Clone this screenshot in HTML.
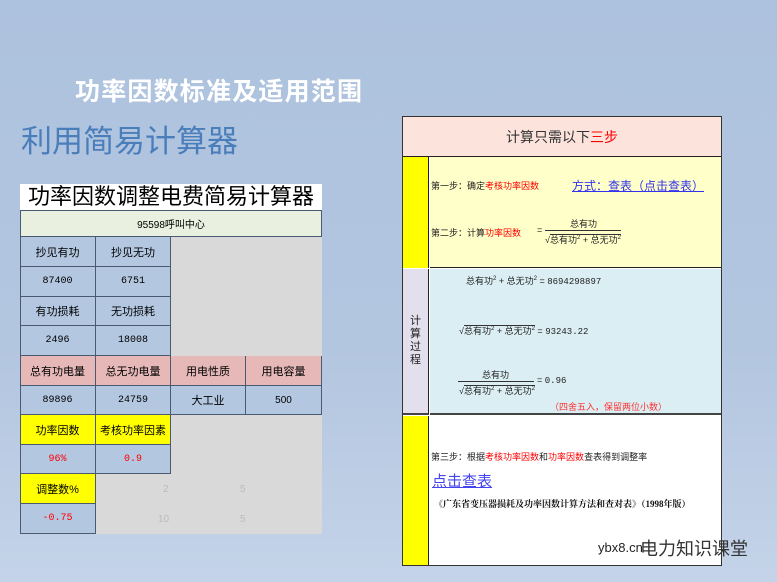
<!DOCTYPE html>
<html><head><meta charset="utf-8"><style>
*{margin:0;padding:0;box-sizing:border-box}
body{width:777px;height:582px;overflow:hidden;background:linear-gradient(#adc2de,#b3c6e0 60%,#c4d3e8);font-family:"Liberation Sans","Noto Sans CJK SC",sans-serif;position:relative}
.a{position:absolute}
.c{position:absolute;display:flex;align-items:center;justify-content:center;font-size:11px;color:#000;border-right:1px solid #4a5a70;border-bottom:1px solid #4a5a70}
.b{background:#b3c7e1}.p{background:#e6b8b8}.y{background:#ffff00}
.r{color:#ff0000}
.m{font-family:"Liberation Mono","Noto Sans CJK SC",monospace}
.s{font-size:9px;color:#222}
</style></head><body>
<div class="a" style="left:75px;top:72px;font-size:25px;font-weight:bold;color:#fff;letter-spacing:1.2px">功率因数标准及适用范围</div>
<div class="a" style="left:21px;top:116px;font-size:31px;color:#4a7ebb">利用简易计算器</div>

<div class="a" style="left:20px;top:184px;width:302px;height:26px;background:#fff;font-size:22px;line-height:26px;text-align:center;color:#000">功率因数调整电费简易计算器</div>
<div class="a" style="left:171px;top:237px;width:151px;height:297px;background:#d9d9d9"></div>
<div class="a" style="left:96px;top:474px;width:226px;height:60px;background:#d9d9d9"></div>
<div class="c" style="left:20px;top:210px;width:302px;height:27px;background:#e9f0df;border-left:1px solid #4a5a70;border-top:1px solid #4a5a70;font-size:10px">95598呼叫中心</div>
<div class="c b" style="left:20px;top:237px;width:76px;height:30px">抄见有功</div>
<div class="c b" style="left:96px;top:237px;width:75px;height:30px">抄见无功</div>
<div class="c b m" style="left:20px;top:267px;width:76px;height:30px;font-size:10px">87400</div>
<div class="c b m" style="left:96px;top:267px;width:75px;height:30px;font-size:10px">6751</div>
<div class="c b" style="left:20px;top:297px;width:76px;height:29px">有功损耗</div>
<div class="c b" style="left:96px;top:297px;width:75px;height:29px">无功损耗</div>
<div class="c b m" style="left:20px;top:326px;width:76px;height:30px;font-size:10px">2496</div>
<div class="c b m" style="left:96px;top:326px;width:75px;height:30px;font-size:10px">18008</div>
<div class="c p" style="left:20px;top:356px;width:76px;height:30px">总有功电量</div>
<div class="c p" style="left:96px;top:356px;width:75px;height:30px">总无功电量</div>
<div class="c p" style="left:171px;top:356px;width:75px;height:30px">用电性质</div>
<div class="c p" style="left:246px;top:356px;width:76px;height:30px">用电容量</div>
<div class="c b m" style="left:20px;top:386px;width:76px;height:29px;font-size:10px">89896</div>
<div class="c b m" style="left:96px;top:386px;width:75px;height:29px;font-size:10px">24759</div>
<div class="c b" style="left:171px;top:386px;width:75px;height:29px">大工业</div>
<div class="c b" style="left:246px;top:386px;width:76px;height:29px;font-size:10px">500</div>
<div class="c y" style="left:20px;top:415px;width:76px;height:30px">功率因数</div>
<div class="c y" style="left:96px;top:415px;width:75px;height:30px">考核功率因素</div>
<div class="c b m r" style="left:20px;top:445px;width:76px;height:29px;font-size:10px">96%</div>
<div class="c b m r" style="left:96px;top:445px;width:75px;height:29px;font-size:10px">0.9</div>
<div class="c y" style="left:20px;top:474px;width:76px;height:30px">调整数%</div>
<div class="c b m r" style="left:20px;top:504px;width:76px;height:30px;font-size:10px">-0.75</div>
<div class="a" style="left:20px;top:210px;width:1px;height:324px;background:#4a5a70"></div>
<div class="a" style="left:163px;top:484px;font-size:10px;color:#bbb">2</div>
<div class="a" style="left:240px;top:484px;font-size:10px;color:#bbb">5</div>
<div class="a" style="left:158px;top:514px;font-size:10px;color:#bbb">10</div>
<div class="a" style="left:240px;top:514px;font-size:10px;color:#bbb">5</div>

<!-- right panel -->
<div class="a" style="left:402px;top:116px;width:320px;height:450px;border:1px solid #333;background:#fff"></div>
<div class="a" style="left:403px;top:117px;width:318px;height:40px;background:#fce4dc;border-bottom:1px solid #222;font-size:14px;color:#333;text-align:center;line-height:40px">计算只需以下<span class="r">三步</span></div>
<div class="a" style="left:403px;top:157px;width:26px;height:111px;background:#ffff00;border-right:1px solid #222"></div>
<div class="a" style="left:430px;top:157px;width:291px;height:111px;background:#ffffc9;border-bottom:1px solid #222"></div>
<div class="a s" style="left:431px;top:179px">第一步：确定<span class="r">考核功率因数</span></div>
<div class="a" style="left:572px;top:177px;font-size:12px;color:#3333ee;text-decoration:underline">方式：查表（点击查表）</div>
<div class="a s" style="left:431px;top:226px">第二步：计算<span class="r">功率因数</span></div>
<div class="a s" style="left:537px;top:225px">=</div>
<div class="a s" style="left:570px;top:217px">总有功</div>
<div class="a" style="left:545px;top:230px;width:76px;height:1px;background:#333"></div>
<div class="a s" style="left:545px;top:233px">√<span style="border-top:1px solid #333">总有功<sup style="font-size:6px">2</sup> + 总无功<sup style="font-size:6px">2</sup></span></div>

<div class="a" style="left:403px;top:269px;width:26px;height:146px;background:#e4dfec;border-right:1px solid #222;border-bottom:2px solid #444;font-size:11px;line-height:13px;color:#222;display:flex;align-items:center;justify-content:center;text-align:center">计<br>算<br>过<br>程</div>
<div class="a" style="left:430px;top:269px;width:291px;height:146px;background:#daeef3;border-bottom:2px solid #444"></div>
<div class="a s" style="left:466px;top:274px">总有功<sup style="font-size:6px">2</sup> + 总无功<sup style="font-size:6px">2</sup> = <span class="m">8694298897</span></div>
<div class="a s" style="left:459px;top:324px">√<span style="border-top:1px solid #333">总有功<sup style="font-size:6px">2</sup> + 总无功<sup style="font-size:6px">2</sup></span> = <span class="m">93243.22</span></div>
<div class="a s" style="left:482px;top:368px">总有功</div>
<div class="a" style="left:458px;top:381px;width:76px;height:1px;background:#333"></div>
<div class="a s" style="left:459px;top:384px">√<span style="border-top:1px solid #333">总有功<sup style="font-size:6px">2</sup> + 总无功<sup style="font-size:6px">2</sup></span></div>
<div class="a s" style="left:537px;top:375px">= <span class="m">0.96</span></div>
<div class="a" style="left:550px;top:400px;font-size:9px;color:#f33">（四舍五入，保留两位小数）</div>

<div class="a" style="left:403px;top:416px;width:26px;height:149px;background:#ffff00;border-right:1px solid #222"></div>
<div class="a s" style="left:431px;top:450px">第三步：根据<span class="r">考核功率因数</span>和<span class="r">功率因数</span>查表得到调整率</div>
<div class="a" style="left:432px;top:470px;font-size:15px;color:#4444ee;text-decoration:underline">点击查表</div>
<div class="a" style="left:434px;top:497px;font-size:9px;font-weight:bold;color:#111;font-family:'Liberation Serif','Noto Serif CJK SC',serif">《广东省变压器损耗及功率因数计算方法和查对表》（1998年版）</div>
<div class="a" style="left:598px;top:540px;font-size:13px;color:#222">ybx8.cn</div>
<div class="a" style="left:640px;top:535px;font-size:18px;color:#333">电力知识课堂</div>
</body></html>
